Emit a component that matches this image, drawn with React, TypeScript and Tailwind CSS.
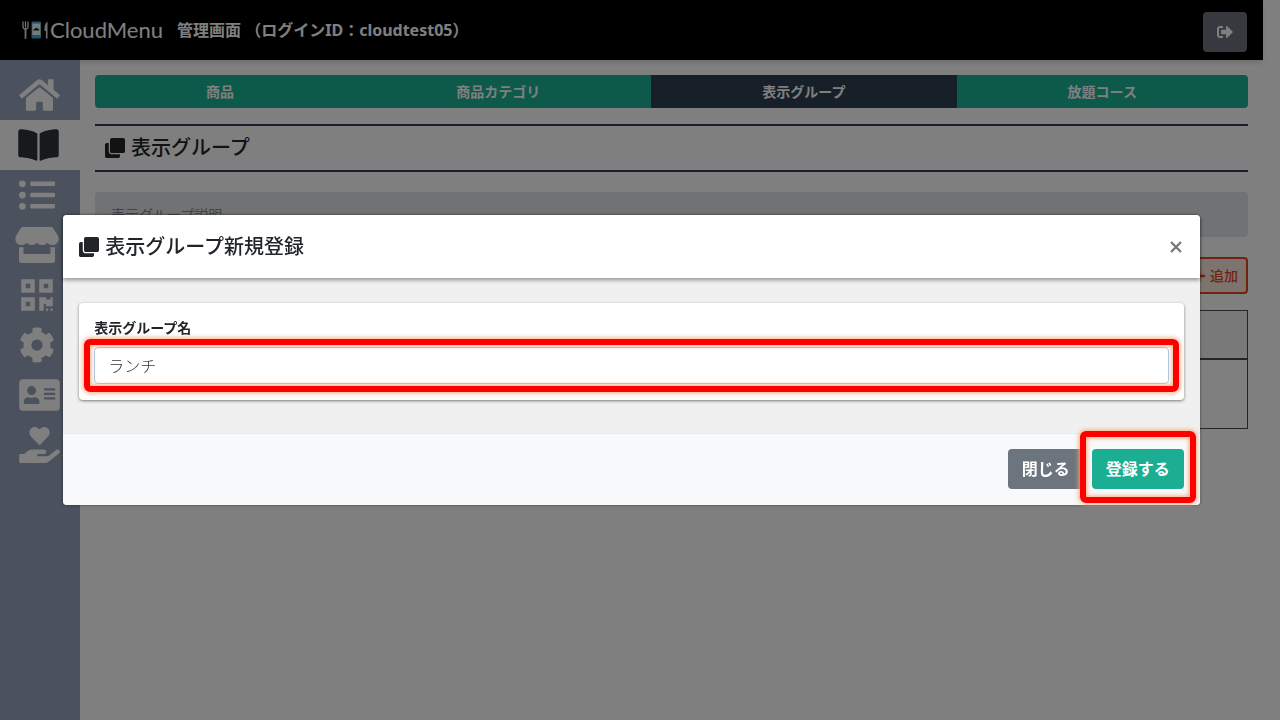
import type { ReactNode } from 'react';
import {
  FaAddressCard,
  FaBookOpen,
  FaClone,
  FaCog,
  FaHandHoldingHeart,
  FaHome,
  FaListUl,
  FaPlus,
  FaQrcode,
  FaSignOutAlt,
  FaStore,
} from 'react-icons/fa';

const navItems = [
  { label: 'ホーム', icon: FaHome, size: 'w-[41px]', pad: 'pr-0.5' },
  { label: 'メニュー', icon: FaBookOpen, size: 'w-[41px]', pad: 'pr-1', active: true },
  { label: '注文一覧', icon: FaListUl, size: 'w-9', pad: 'pr-1.5' },
  { label: '店舗', icon: FaStore, size: 'w-11', pad: 'pr-1.5' },
  { label: 'QRコード', icon: FaQrcode, size: 'w-8', pad: 'pr-1.5' },
  { label: '設定', icon: FaCog, size: 'w-9', pad: 'pr-1.5' },
  { label: 'アカウント', icon: FaAddressCard, size: 'w-[41px]', pad: 'pr-0.5' },
  { label: 'サポート', icon: FaHandHoldingHeart, size: 'w-[41px]', pad: 'pr-0.5' },
];

const tabs = [
  { label: '商品' },
  { label: '商品カテゴリ' },
  { label: '表示グループ', active: true },
  { label: '放題コース' },
];

function LogoMark() {
  return (
    <svg viewBox="0 0 27 18" className="h-[18px] w-[27px]" aria-hidden="true">
      <g fill="none" stroke="#e0e0e0" strokeWidth="1.3" strokeLinecap="round">
        <path d="M1 1v4.5a2.500 2.500 0 0 0 5 0V1M3.500 1v5" />
        <path d="M3.500 8v9" strokeWidth="1.800" />
      </g>
      <rect x="9.500" y="0.500" width="9.500" height="17" rx="1" fill="#3fa9cf" />
      <rect x="10.300" y="2.500" width="8" height="11.500" fill="#f4f4f4" />
      <path d="M11.300 9.500h6c0-1.500-1-2-2-2-.500-1-2-1-2.300.200-1 0-1.700.800-1.700 1.800z" fill="#222" />
      <path d="M25.500 17.500V.5c-2.400 1.500-3.500 5-2.900 9.500h1.300v7.500z" fill="#e0e0e0" />
    </svg>
  );
}

function Header() {
  return (
    <header className="flex h-15 items-center bg-black pr-4 pl-[22px] text-white shadow-md">
      <a href="#top" className="flex items-center gap-px">
        <LogoMark />
        <span className="font-[Lato] text-[22px] leading-none">CloudMenu</span>
      </a>
      <p className="ml-[14px] text-base font-bold">管理画面 （ログインID：cloudtest05）</p>
      <button
        type="button"
        aria-label="ログアウト"
        className="mt-1 ml-auto flex h-10 w-11 items-center justify-center rounded bg-[#6c757d]"
      >
        <FaSignOutAlt className="size-4" />
      </button>
    </header>
  );
}

function Sidebar() {
  return (
    <nav className="w-20 shrink-0 bg-[#96a4ba] pt-[10px]">
      {navItems.map(({ label, icon: Icon, size, pad, active }) => (
        <a
          key={label}
          href="#nav"
          aria-label={label}
          className={`flex h-[50px] items-center justify-center ${pad} ${
            active ? 'bg-white text-[#2f353a]' : 'text-white'
          }`}
        >
          <Icon className={`h-9 ${size}`} />
        </a>
      ))}
    </nav>
  );
}

function Highlight({ children, className }: { children: ReactNode; className: string }) {
  return (
    <div className="relative">
      {children}
      <span
        className={`pointer-events-none absolute rounded-md border-6 border-[#ff0000] shadow-[0_0_5px_1px_#f4a878,inset_0_0_4px_1px_#f4a878] ${className}`}
      />
    </div>
  );
}

function Dialog() {
  return (
    <div className="fixed inset-0 flex items-center justify-center bg-black/50 pr-[17px]">
      <div
        role="dialog"
        aria-modal="true"
        aria-labelledby="dialog-title"
        className="w-[90%] rounded bg-[#f0f0f0] shadow-[0_0_3px_rgba(0,0,0,0.5)]"
      >
        <div className="relative flex h-[63px] items-center justify-between rounded-t bg-white px-4 shadow-[0_2px_4px_rgba(0,0,0,0.4)]">
          <h2 id="dialog-title" className="flex items-center gap-[6px] text-xl font-medium">
            <FaClone className="size-5" />
            表示グループ新規登録
          </h2>
          <button type="button" aria-label="閉じる" className="px-0.5 text-[#777]">
            <svg viewBox="0 0 12 12" className="size-3" aria-hidden="true">
              <path d="M1 1l10 10M11 1L1 11" stroke="currentColor" strokeWidth="2.300" />
            </svg>
          </button>
        </div>

        <div className="px-4 pt-[25px] pb-[33px]">
          <div className="rounded-sm bg-white px-[15px] pt-[15px] pb-4 shadow-[0_1px_3px_rgba(0,0,0,0.5)]">
            <label htmlFor="group-name" className="mb-[9px] block text-sm leading-5 font-semibold">
              表示グループ名
            </label>
            <Highlight className="-inset-x-[10px] -inset-y-2">
              <input
                id="group-name"
                type="text"
                defaultValue="ランチ"
                className="block h-[37px] w-full rounded border border-[#a9c7e8] bg-white px-[13px] pb-0.5 text-base font-light text-[#333] outline-none"
              />
            </Highlight>
          </div>
        </div>

        <div className="flex justify-end gap-2 rounded-b border-t border-[#e7eaec] bg-[#f8f9fb] p-4 pt-[15px] text-base font-bold text-white">
          <button type="button" className="h-10 rounded bg-[#6c757d] px-[14px]">
            閉じる
          </button>
          <Highlight className="-inset-x-3 -top-[18px] -bottom-[14px]">
            <button type="submit" className="h-10 rounded bg-[#1cae93] px-[14px]">
              登録する
            </button>
          </Highlight>
        </div>
      </div>
    </div>
  );
}

export default function App() {
  return (
    <div className="flex min-h-screen flex-col bg-white pr-[17px] font-['Noto_Sans','Noto_Sans_CJK_JP',sans-serif] text-[#212529]">
      <Header />
      <div className="flex grow">
        <Sidebar />
        <main className="grow p-[15px]">
          <div className="flex overflow-hidden rounded">
            {tabs.map(({ label, active }) => (
              <button
                key={label}
                type="button"
                className={
                  active
                    ? 'h-[33px] flex-auto bg-[#2f4050] text-sm font-bold text-white'
                    : 'h-[33px] flex-auto bg-[#1ab394] text-sm font-bold text-white'
                }
              >
                {label}
              </button>
            ))}
          </div>

          <h1 className="mt-4 flex h-12 items-center gap-[6px] border-y-2 border-[#2f4050] px-[10px] text-xl font-medium">
            <FaClone className="size-5" />
            表示グループ
          </h1>

          <p className="mt-5 rounded bg-[#e2e4e9] px-4 py-3 text-sm leading-[21px] text-[#85888c]">
            表示グループ説明
          </p>

          <div className="mt-5 flex justify-end">
            <button
              type="button"
              className="flex h-[37px] items-center gap-1 rounded-sm border-2 border-[#e0481c] bg-[#fae8de] px-2 text-sm font-medium text-[#e0481c]"
            >
              <FaPlus className="size-3.5" />
              追加
            </button>
          </div>

          <table className="mt-4 w-full border-collapse border border-[#454d55]">
            <thead>
              <tr className="h-12 border-b-2 border-[#454d55] bg-[#f2f2f2]">
                <th scope="col" aria-label="表示グループ名" />
              </tr>
            </thead>
            <tbody>
              <tr className="h-[70px]">
                <td />
              </tr>
            </tbody>
          </table>
        </main>
      </div>
      <Dialog />
    </div>
  );
}
